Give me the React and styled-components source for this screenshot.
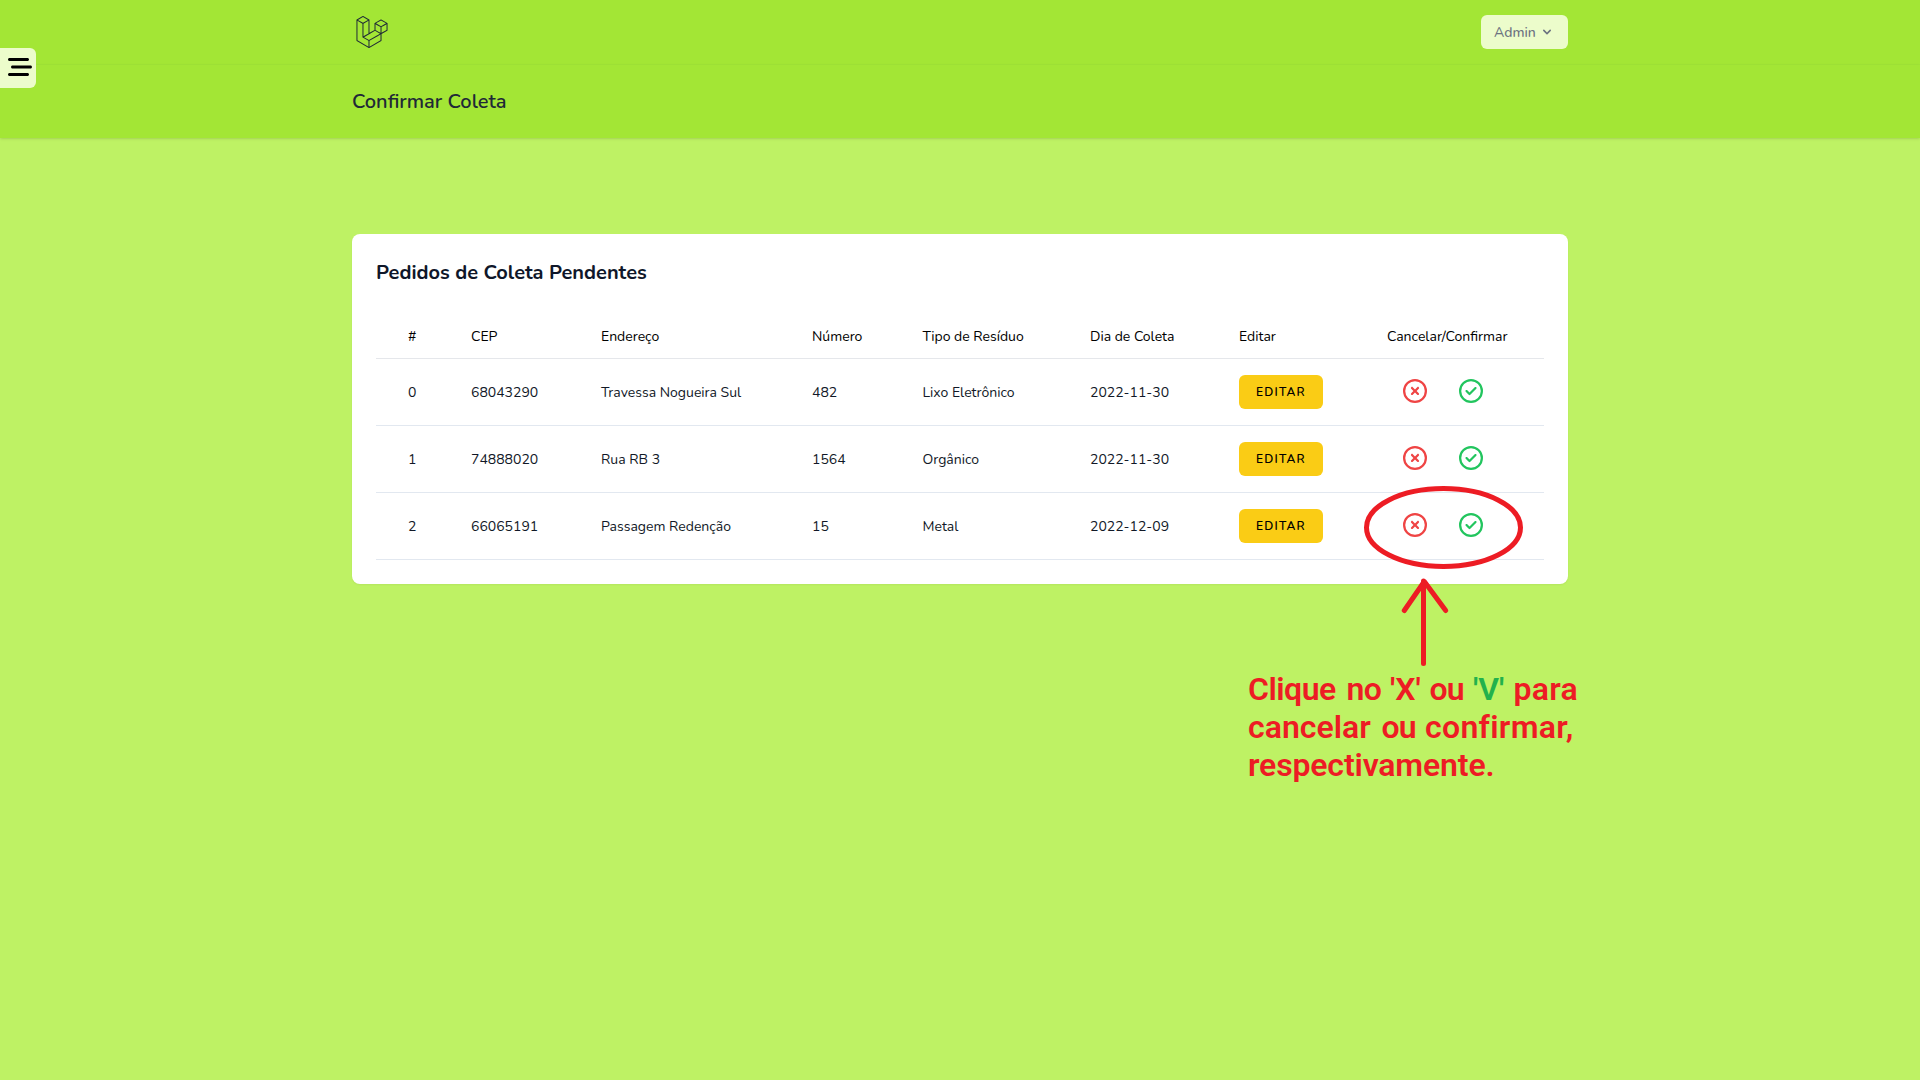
import React from 'react';
import styled, { createGlobalStyle } from 'styled-components';
import { FaBarsStaggered, FaRegCircleCheck, FaRegCircleXmark } from 'react-icons/fa6';
import { SiLaravel } from 'react-icons/si';

const GlobalStyle = createGlobalStyle`
  *, *::before, *::after { box-sizing: border-box; }
  body {
    margin: 0;
    background: #bef264;
    color: #111827;
    font-family: Nunito, Lato, "Open Sans", sans-serif;
    font-size: 14px;
    line-height: 20px;
  }
  button { font: inherit; color: inherit; border: 0; padding: 0; margin: 0; background: none; cursor: pointer; }
`;

const Page = styled.div`
  position: relative;
  min-height: 1080px;
  background: #bef264;
  overflow: hidden;
`;

const Container = styled.div`
  width: 1280px;
  margin: 0 auto;
  padding: 0 32px;
  display: flex;
  align-items: center;
  justify-content: space-between;
`;

const Nav = styled.nav`
  height: 65px;
  background: #a3e635;
  border-bottom: 1px solid #a0e436;

  ${Container} { height: 64px; }
`;

const Logo = styled.a`
  display: flex;
  width: 39px;
  justify-content: center;
  color: #1f2937;
`;

const UserMenu = styled.button`
  display: flex;
  align-items: center;
  justify-content: space-between;
  width: 87px;
  height: 34px;
  padding: 1px 13px 0;
  border-radius: 6px;
  background: #ecfccb;
  color: #6b7280;
  font-weight: 500;

  svg { margin-top: -1px; }
`;

const Header = styled.header`
  height: 73px;
  background: #a3e635;
  box-shadow: 0 1px 3px rgba(0, 0, 0, 0.1), 0 1px 2px -1px rgba(0, 0, 0, 0.1);

  ${Container} { height: 73px; }
`;

const PageTitle = styled.h2`
  margin: 0;
  font-size: 20px;
  line-height: 25px;
  font-weight: 600;
  color: #1f2937;
`;

const SidebarToggle = styled.button`
  position: absolute;
  left: 0;
  top: 48px;
  width: 36px;
  height: 40px;
  padding: 7px 4px 9px 8px;
  border-radius: 0 6px 6px 0;
  background: #ecfccb;
  color: #000;

  svg { display: block; }
`;

const Main = styled.main`
  width: 1280px;
  margin: 0 auto;
  padding: 96px 32px 0;
`;

const Card = styled.section`
  padding: 24px;
  background: #fff;
  border-radius: 8px;
  box-shadow: 0 1px 2px rgba(0, 0, 0, 0.05);
`;

const CardTitle = styled.h3`
  margin: 0 0 26px;
  font-size: 20px;
  line-height: 30px;
  font-weight: 700;
  color: #0f172a;
`;

const Table = styled.table`
  width: 1168px;
  table-layout: fixed;
  border-collapse: separate;
  border-spacing: 0;
  text-align: left;
`;

const Column = styled.col`
  width: ${(p) => p.$width}px;
`;

const HeadCell = styled.th`
  height: 45px;
  padding: 1px 0 0 32px;
  border-bottom: 1px solid #e5e7eb;
  font-weight: 400;
  color: #000;
  white-space: nowrap;
`;

const Cell = styled.td`
  height: 67px;
  padding: ${(p) => (p.$control ? 0 : 2)}px 0 0 32px;
  border-bottom: 1px solid #e2e8f0;
  white-space: nowrap;
`;

const EditButton = styled.button`
  display: flex;
  align-items: center;
  justify-content: center;
  width: 84px;
  height: 34px;
  border-radius: 6px;
  background: #facc15;
  color: #000;
  font-size: 12px;
  line-height: 16px;
  font-weight: 600;
  letter-spacing: 1.2px;
  text-transform: uppercase;
`;

const Actions = styled.div`
  display: flex;
  gap: 32px;
  padding: 0 0 2px 16px;
`;

const ActionButton = styled.button`
  display: block;
  color: ${(p) => p.$color};

  svg { display: block; }
`;

const Drawing = styled.svg`
  position: absolute;
  left: 1360px;
  top: 480px;
  fill: none;
  stroke: #ed1c24;
  stroke-width: 5;
  stroke-linecap: round;
  stroke-linejoin: round;
`;

const Note = styled.div`
  position: absolute;
  left: 1248px;
  top: 670px;
  font-family: Roboto, "Liberation Sans", sans-serif;
  font-size: 32px;
  line-height: 38px;
  font-weight: 600;
  color: #ed1c24;
`;

const NoteLine = styled.div`
  display: flex;
  white-space: pre;
`;

const Word = styled.span`
  width: ${(p) => (p.$width ? `${p.$width}px` : 'auto')};
  letter-spacing: ${(p) => p.$spacing || 0}px;
  color: ${(p) => p.$color || 'inherit'};
`;

const columns = [
  ['#', 63],
  ['CEP', 130],
  ['Endereço', 211],
  ['Número', 110.5],
  ['Tipo de Resíduo', 167.5],
  ['Dia de Coleta', 149],
  ['Editar', 148],
  ['Cancelar/Confirmar', 189],
];

const rows = [
  ['0', '68043290', 'Travessa Nogueira Sul', '482', 'Lixo Eletrônico', '2022-11-30'],
  ['1', '74888020', 'Rua RB 3', '1564', 'Orgânico', '2022-11-30'],
  ['2', '66065191', 'Passagem Redenção', '15', 'Metal', '2022-12-09'],
];

const noteLines = [
  [
    { text: 'Clique ', width: 98.5, spacing: -0.5 },
    { text: 'no ', width: 43.5, spacing: -0.6 },
    { text: "'X' ", width: 39.5 },
    { text: 'ou ', width: 43.5, spacing: -0.8 },
    { text: "'V' ", width: 40.5, color: '#22b14c' },
    { text: 'para', spacing: 0.3 },
  ],
  [
    { text: 'cancelar ', width: 133.5 },
    { text: 'ou ', width: 43.5, spacing: -0.8 },
    { text: 'confirmar,', spacing: 0.3 },
  ],
  [{ text: 'respectivamente.', spacing: -0.15 }],
];

export default function App() {
  return (
    <Page>
      <GlobalStyle />
      <Nav>
        <Container>
          <Logo>
            <SiLaravel size={32} />
          </Logo>
          <UserMenu>
            Admin
            <svg width="16" height="16" viewBox="0 0 20 20" fill="currentColor">
              <path
                fillRule="evenodd"
                clipRule="evenodd"
                d="M5.293 7.293a1 1 0 011.414 0L10 10.586l3.293-3.293a1 1 0 111.414 1.414l-4 4a1 1 0 01-1.414 0l-4-4a1 1 0 010-1.414z"
              />
            </svg>
          </UserMenu>
        </Container>
      </Nav>
      <Header>
        <Container>
          <PageTitle>Confirmar Coleta</PageTitle>
        </Container>
      </Header>
      <SidebarToggle aria-label="Menu">
        <FaBarsStaggered size={24} />
      </SidebarToggle>

      <Main>
        <Card>
          <CardTitle>Pedidos de Coleta Pendentes</CardTitle>
          <Table>
            <colgroup>
              {columns.map(([name, width]) => (
                <Column key={name} $width={width} />
              ))}
            </colgroup>
            <thead>
              <tr>
                {columns.map(([name]) => (
                  <HeadCell key={name}>{name}</HeadCell>
                ))}
              </tr>
            </thead>
            <tbody>
              {rows.map((row) => (
                <tr key={row[0]}>
                  {row.map((value, i) => (
                    <Cell key={i}>{value}</Cell>
                  ))}
                  <Cell $control>
                    <EditButton>Editar</EditButton>
                  </Cell>
                  <Cell $control>
                    <Actions>
                      <ActionButton $color="#ef4444" aria-label="Cancelar">
                        <FaRegCircleXmark size={24} />
                      </ActionButton>
                      <ActionButton $color="#22c55e" aria-label="Confirmar">
                        <FaRegCircleCheck size={24} />
                      </ActionButton>
                    </Actions>
                  </Cell>
                </tr>
              ))}
            </tbody>
          </Table>
        </Card>
      </Main>

      <Drawing width="170" height="190" viewBox="0 0 170 190">
        <ellipse cx="83.5" cy="47.5" rx="77" ry="39" />
        <path d="M63.5 101V183.5M44.3 130.5L64.3 101.5L85.7 130.5" />
      </Drawing>
      <Note>
        {noteLines.map((words, i) => (
          <NoteLine key={i}>
            {words.map((w, j) => (
              <Word key={j} $width={w.width} $spacing={w.spacing} $color={w.color}>
                {w.text}
              </Word>
            ))}
          </NoteLine>
        ))}
      </Note>
    </Page>
  );
}
